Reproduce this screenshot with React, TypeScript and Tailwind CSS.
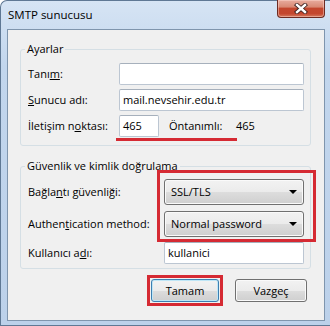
import React from "react";

function TextBox({ value, w }: { value?: string; w: string }) {
  return (
    <div
      className={`${w} h-[22px] rounded-[2px] border border-[#bcc6d2] border-t-[#a6b0bc] bg-white pl-[3px] flex items-center leading-[14px]`}
    >
      {value}
    </div>
  );
}

function Combo({ value }: { value: string }) {
  return (
    <div className="w-[140px] h-[26px] rounded-[3px] border border-[#707070] bg-[linear-gradient(#f2f2f2_0%,#ebebeb_50%,#dddddd_50%,#cfcfcf_100%)] shadow-[inset_0_0_0_1px_#fafafa] flex items-center justify-between pl-[6px] pr-[6px] leading-[14px]">
      <span>{value}</span>
      <svg width="8" height="4" viewBox="0 0 8 4">
        <polygon points="0,0 8,0 4,4" fill="#000" />
      </svg>
    </div>
  );
}

function Button({ label, def }: { label: string; def?: boolean }) {
  return (
    <div
      className={`h-[23px] rounded-[3px] border flex items-center justify-center leading-[14px] bg-[linear-gradient(#f2f2f2_0%,#ebebeb_50%,#dddddd_50%,#cfcfcf_100%)] ${
        def
          ? "w-[68px] border-[#3c7fb1] shadow-[inset_0_0_0_1px_#bfe6f6]"
          : "w-[72px] border-[#707070] shadow-[inset_0_0_0_1px_#fafafa]"
      }`}
    >
      {label}
    </div>
  );
}

export default function App() {
  return (
    <div className="w-[330px] h-[326px] overflow-hidden bg-white font-['Open_Sans',sans-serif] text-[11px] text-black">
      <div className="w-[330px] h-[326px] flex flex-col rounded-tl-[7px] border-l border-t border-b border-[#5f7894] bg-[linear-gradient(#d6e4f4,#c2d6ed_20%,#bcd1ea)]">
        {/* Title bar */}
        <div className="h-[28px] flex items-start justify-between shrink-0">
          <span className="pl-[7px] pt-[7px] leading-[14px] text-[11.5px]">SMTP sunucusu</span>
          <div className="-mt-px mr-[5px] w-[48px] h-[18px] rounded-b-[4px] border border-t-0 border-[#6d2b22] bg-[linear-gradient(#e8ac9e_0%,#d98a75_40%,#c3472e_50%,#c4472f_80%,#d47a5f_100%)] shadow-[inset_0_0_0_1px_rgba(255,220,210,0.45)] flex items-center justify-center">
            <svg width="14" height="11" viewBox="0 0 14 11">
              <path d="M3 2 L11 9 M11 2 L3 9" stroke="#3e2220" strokeWidth="4.2" strokeLinecap="square" />
              <path d="M3 2 L11 9 M11 2 L3 9" stroke="#ffffff" strokeWidth="2.4" strokeLinecap="square" />
            </svg>
          </div>
        </div>

        {/* Client area */}
        <div className="flex-1 ml-[6px] mr-[5px] mb-[4px] border border-[#7f95ad] bg-[#f0f0f0] flex flex-col">
          {/* Group 1 */}
          <fieldset className="ml-[12px] mr-[13px] mt-[11px] rounded-[3px] border border-[#d5dfe5] pl-[7px] pr-[6px] pt-[6px] pb-[8px]">
            <legend className="-ml-[3px] px-[2px] leading-[16px]">Ayarlar</legend>
            <div className="relative flex flex-col gap-[4px]">
              <div className="flex items-center">
                <span className="w-[91px]">
                  Tanı<u>m</u>:
                </span>
                <TextBox w="w-[185px]" />
              </div>
              <div className="flex items-center">
                <span className="w-[91px]">
                  <u>S</u>unucu adı:
                </span>
                <TextBox w="w-[185px]" value="mail.nevsehir.edu.tr" />
              </div>
              <div className="flex items-center">
                <span className="w-[91px]">
                  İletişim n<u>o</u>ktası:
                </span>
                <TextBox w="w-[40px]" value="465" />
                <span className="ml-[10px] w-[67px]">Öntanımlı:</span>
                <span>465</span>
              </div>
              <div className="absolute left-[88px] top-[75px] w-[121px] h-[3px] bg-[#d52a33]" />
            </div>
          </fieldset>

          {/* Group 2 */}
          <fieldset className="ml-[12px] mr-[13px] mt-[12px] rounded-[3px] border border-[#d5dfe5] pl-[7px] pr-[6px] pt-[5px] pb-[4px]">
            <legend className="-ml-[3px] px-[2px] leading-[16px]">Güvenlik ve kimlik doğrulama</legend>
            <div className="relative flex flex-col">
              <div className="flex items-center">
                <span className="w-[136px]">
                  Bağla<u>n</u>tı güvenliği:
                </span>
                <Combo value="SSL/TLS" />
              </div>
              <div className="flex items-center mt-[6px]">
                <span className="w-[136px]">
                  Authen<u>t</u>ication method:
                </span>
                <Combo value="Normal password" />
              </div>
              <div className="flex items-center mt-[5px]">
                <span className="w-[136px]">
                  Kullanıcı a<u>d</u>ı:
                </span>
                <TextBox w="w-[140px]" value="kullanici" />
              </div>
              <div className="absolute left-[129px] top-[-9px] w-[159px] h-[72px] border-[3px] border-[#d52a33]" />
            </div>
          </fieldset>

          {/* Buttons */}
          <div className="mt-[6px] mr-[17px] flex items-center justify-end gap-[12px]">
            <div className="border-[3px] border-[#d52a33] p-[1px]">
              <Button label="Tamam" def />
            </div>
            <Button label="Vazgeç" />
          </div>
        </div>
      </div>
    </div>
  );
}
